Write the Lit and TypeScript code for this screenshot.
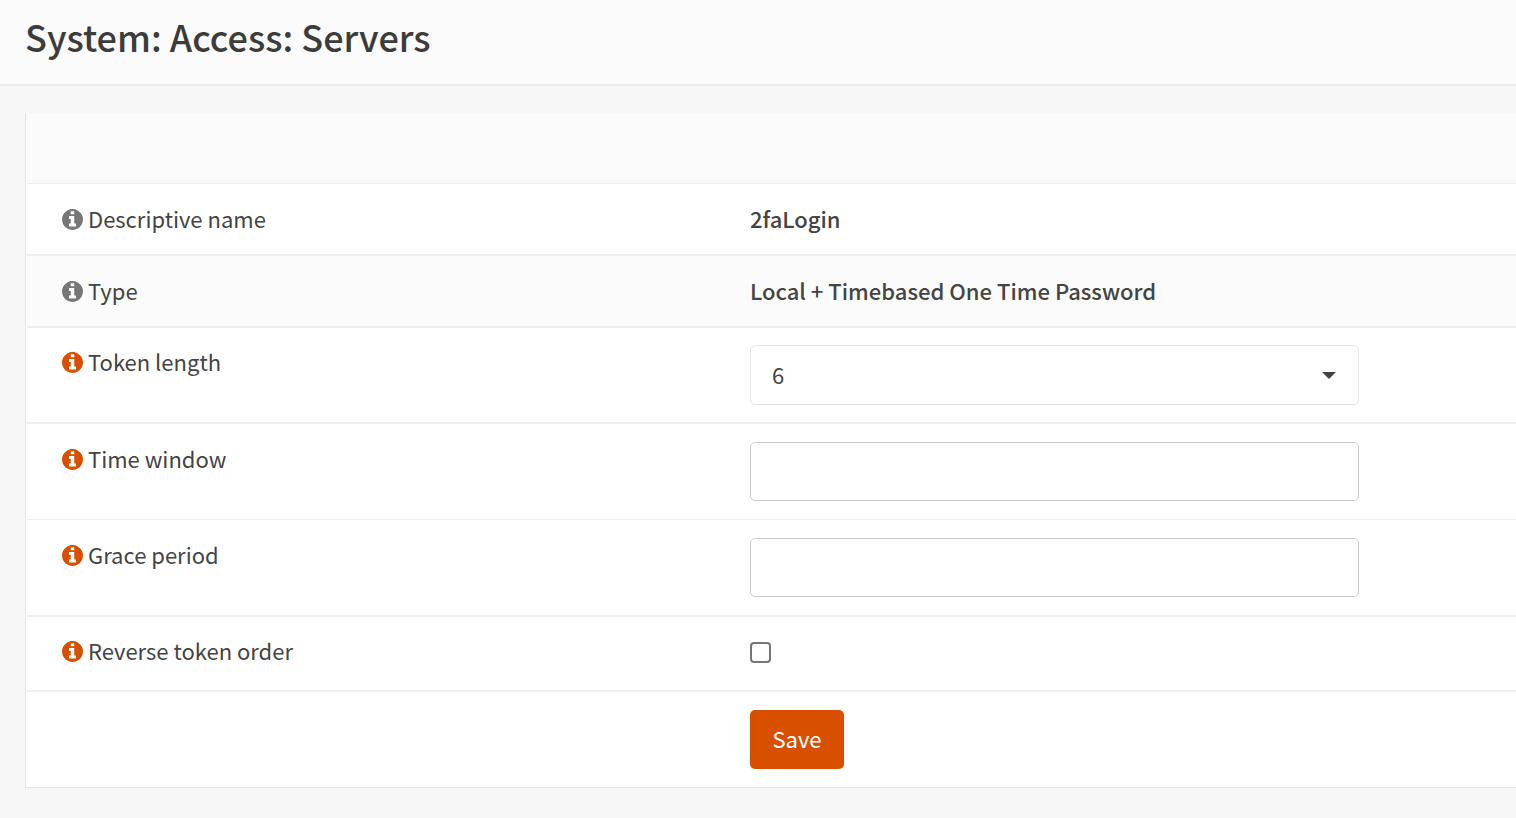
import { LitElement, html, css, svg } from "lit";
import { customElement } from "lit/decorators.js";

@customElement("info-icon")
export class InfoIcon extends LitElement {
  static styles = css`
    :host {
      display: block;
      flex: none;
      width: 21px;
      height: 21px;
    }
    .glyph {
      display: block;
      width: 100%;
      height: 100%;
      fill: currentColor;
    }
  `;

  render() {
    return html`<svg class="glyph" viewBox="0 0 1536 1536" aria-hidden="true">
      ${svg`<path d="M1024 1248v-160q0-14-9-23t-23-9h-96V544q0-14-9-23t-23-9H544q-14 0-23 9t-9 23v160q0 14 9 23t23 9h96v320h-96q-14 0-23 9t-9 23v160q0 14 9 23t23 9h448q14 0 23-9t9-23zM896 352V192q0-14-9-23t-23-9H672q-14 0-23 9t-9 23v160q0 14 9 23t23 9h192q14 0 23-9t9-23zM1536 768q0 209-103 385.500T1153.500 1433 768 1536t-385.500-103T103 1153.500 0 768t103-385.500T382.500 103 768 0t385.500 103T1433 382.500 1536 768z"/>`}
    </svg>`;
  }
}

@customElement("app-root")
export class AppRoot extends LitElement {
  static styles = css`
    :host {
      display: block;
      min-height: 100vh;
      background: #f7f7f7;
      color: #444;
      font-family: "Source Sans Pro", "Noto Sans CJK SC", sans-serif;
      font-size: 22px;
      line-height: 34px;
    }
    * {
      box-sizing: border-box;
    }
    .page-head {
      padding: 12px 25px 24px;
      background: #fbfbfb;
      border-bottom: 2px solid #e9e9e9;
    }
    .title {
      margin: 0;
      font-size: 36px;
      line-height: 48px;
      font-weight: 500;
      color: #3c3c3b;
    }
    .content {
      padding: 27px 0 30px 25px;
    }
    .card {
      padding-left: 1px;
      background: #fff;
      border-left: 1px solid #e5e5e5;
      border-bottom: 1px solid #e5e5e5;
    }
    .row {
      display: grid;
      grid-template-columns: minmax(0, 723fr) minmax(0, 766fr);
      border-top: 2px solid #eee;
    }
    .thin {
      border-top-width: 1px;
    }
    .shaded {
      background: #fbfbfb;
    }
    .blank {
      height: 70px;
      background: #fbfbfb;
    }
    .label {
      display: flex;
      align-items: center;
      align-self: start;
      gap: 5px;
      padding: 17px 12px 19px 35px;
    }
    .snug {
      padding-top: 16px;
    }
    .muted,
    .accent {
      margin-top: 3px;
    }
    .muted {
      color: #777;
    }
    .accent {
      color: #d94f00;
    }
    .value {
      display: flex;
      align-items: center;
      padding-right: 12px;
    }
    .strong {
      padding-bottom: 2px;
      font-weight: 500;
    }
    .picker {
      min-height: 94px;
    }
    .entry {
      min-height: 95px;
    }
    .check {
      padding-bottom: 2px;
      min-height: 73px;
    }
    .select-wrap {
      position: relative;
      width: 100%;
      max-width: 609px;
    }
    .control {
      display: block;
      width: 100%;
      max-width: 609px;
      height: 59px;
      margin: 0;
      padding: 0 21px 2px;
      background: #fff;
      border: 1px solid #ccc;
      border-radius: 5px;
      font: inherit;
      color: inherit;
    }
    .select {
      appearance: none;
      height: 60px;
      border-color: #e5e5e5;
    }
    .caret {
      position: absolute;
      right: 23px;
      top: 27px;
      width: 14px;
      height: 7px;
      fill: #444;
      pointer-events: none;
    }
    .tick {
      appearance: none;
      width: 21px;
      height: 21px;
      margin: 0;
      background: #fff;
      border: 2px solid #767676;
      border-radius: 4px;
    }
    .tick:checked {
      background: #d94f00;
    }
    .save {
      min-width: 94px;
      height: 59px;
      padding: 0 22px 4px;
      border: 0;
      border-radius: 5px;
      background: #d94f00;
      color: #fff;
      font: inherit;
      cursor: pointer;
    }
  `;

  render() {
    return html`
      <header class="page-head"><h1 class="title">System: Access: Servers</h1></header>
      <main class="content">
        <form class="card" @submit=${(e: Event) => e.preventDefault()}>
          <div class="blank"></div>
          <div class="row thin">
            <div class="label"><info-icon class="muted"></info-icon><span>Descriptive name</span></div>
            <div class="value strong">2faLogin</div>
          </div>
          <div class="row shaded">
            <div class="label"><info-icon class="muted"></info-icon><span>Type</span></div>
            <div class="value strong">Local + Timebased One Time Password</div>
          </div>
          <div class="row">
            <div class="label snug"><info-icon class="accent"></info-icon><label for="length">Token length</label></div>
            <div class="value picker">
              <div class="select-wrap">
                <select class="control select" id="length">
                  <option selected>6</option>
                  <option>8</option>
                </select>
                <svg class="caret" viewBox="0 0 14 7" aria-hidden="true"><path d="M0 0h14L7 7z" /></svg>
              </div>
            </div>
          </div>
          <div class="row">
            <div class="label"><info-icon class="accent"></info-icon><label for="window">Time window</label></div>
            <div class="value entry"><input class="control" id="window" type="text" /></div>
          </div>
          <div class="row thin">
            <div class="label"><info-icon class="accent"></info-icon><label for="grace">Grace period</label></div>
            <div class="value entry"><input class="control" id="grace" type="text" /></div>
          </div>
          <div class="row">
            <div class="label snug"><info-icon class="accent"></info-icon><label for="reverse">Reverse token order</label></div>
            <div class="value check"><input class="tick" id="reverse" type="checkbox" /></div>
          </div>
          <div class="row">
            <div></div>
            <div class="value entry"><button class="save" type="submit">Save</button></div>
          </div>
        </form>
      </main>
    `;
  }
}
